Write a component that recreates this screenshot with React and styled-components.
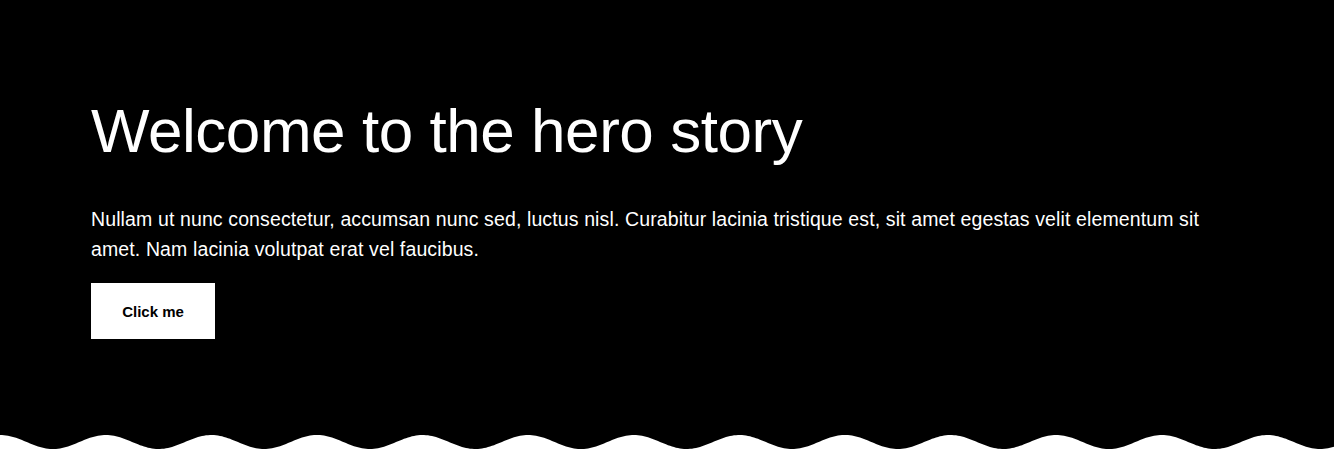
import styled, { createGlobalStyle } from "styled-components"

const Global = createGlobalStyle`
    body {
        margin: 0;
        background: #ffffff;
        font-family: "Liberation Sans", Arial, sans-serif;
    }
`

const PERIOD = 105.6
const OFFSET = 53

function wavePath(width){
    let d = `M0 0 L${width} 0 L${width} 14 `
    // walk right to left along the crest line, then close
    const points = []
    for (let x = width; x >= -PERIOD; x -= 2) {
        const phase = ((x - OFFSET) / PERIOD) * Math.PI * 2
        const y = 7 - 7 * Math.cos(phase)
        points.push(`L${x.toFixed(1)} ${(14 - y).toFixed(2)}`)
    }
    d += points.join(" ") + " L0 14 Z"
    return d
}

function Wave(){
    return (
        <WaveSvg viewBox="0 0 1334 14" preserveAspectRatio="none">
            <rect x="0" y="0" width="1334" height="14" fill="#ffffff" />
            <path d={wavePath(1334)} fill="#000000" />
        </WaveSvg>
    )
}

export default function App(){
    return(
        <>
            <Global />
            <Hero>
                <Content>
                    <Title>Welcome to the hero story</Title>
                    <Text>
                        Nullam ut nunc consectetur, accumsan nunc sed, luctus nisl. Curabitur lacinia tristique est, sit amet egestas velit elementum sit amet. Nam lacinia volutpat erat vel faucibus.
                    </Text>
                    <Button>Click me</Button>
                </Content>
            </Hero>
            <Wave />
        </>
    )
}

const Hero = styled.section`
    background: #000000;
    height: 435px;
    box-sizing: border-box;
    padding: 96px 91px 0 91px;
`

const Content = styled.div`
    display: flex;
    flex-direction: column;
    align-items: flex-start;
    max-width: 1140px;
`

const Title = styled.h1`
    margin: 0;
    color: #ffffff;
    font-size: 62px;
    font-weight: 400;
    line-height: 70px;
    letter-spacing: -0.45px;
`

const Text = styled.p`
    margin: 38px 0 0 0;
    color: #ffffff;
    font-size: 19.5px;
    line-height: 30px;
    letter-spacing: 0.12px;
`

const Button = styled.button`
    margin-top: 19px;
    width: 124px;
    height: 56px;
    border: none;
    background: #ffffff;
    color: #000000;
    font-family: "Liberation Sans", Arial, sans-serif;
    font-size: 15px;
    font-weight: 600;
    cursor: pointer;
`

const WaveSvg = styled.svg`
    display: block;
    width: 100%;
    height: 14px;
`
